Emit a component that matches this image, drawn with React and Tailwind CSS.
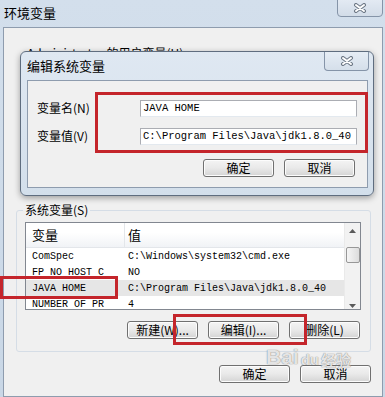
import React from 'react';

const cjk = { fontFamily: '"Noto Sans CJK SC", "Liberation Sans", sans-serif' };
const mono = { fontFamily: '"Liberation Mono", "Noto Sans CJK SC", monospace' };

const CloseGlyph = () => (
    <svg width="14" height="10" viewBox="0 0 14 10">
        <path d="M3 2 L11 8 M11 2 L3 8" stroke="#6b7684" strokeWidth="4" strokeLinecap="round" />
        <path d="M3 2 L11 8 M11 2 L3 8" stroke="#ffffff" strokeWidth="2" strokeLinecap="round" />
    </svg>
);

const Btn = ({ children, className = '' }) => (
    <div
        style={cjk}
        className={`h-[18px] w-[71px] flex items-center justify-center rounded-[3px] border border-[#707070] bg-gradient-to-b from-[#f4f4f4] via-[#e9e9e9] to-[#d4d4d4] text-[12px] leading-none text-black shadow-[inset_0_0_0_1px_#fcfcfc] ${className}`}
    >
        {children}
    </div>
);

const rows = [
    { name: 'ComSpec', value: 'C:\\Windows\\system32\\cmd.exe' },
    { name: 'FP NO HOST C', value: 'NO' },
    { name: 'JAVA HOME', value: 'C:\\Program Files\\Java\\jdk1.8.0_40', selected: true },
    { name: 'NUMBER OF PR', value: '4' },
];

const App = () => {
    return (
        <div className="relative w-[385px] h-[397px] overflow-hidden flex flex-col bg-gradient-to-b from-[#d3dfec] to-[#c9d7e6]">
            {/* title bar */}
            <div className="h-[27px] flex items-start justify-between shrink-0">
                <span style={cjk} className="self-center pl-[4px] pb-[1px] text-[13px] text-black">环境变量</span>
                <div className="w-[46px] h-[18px] mr-[2px] -mt-[1px] flex items-center justify-center rounded-b-[4px] border border-[#8594a8] bg-gradient-to-b from-[#e3eaf3] to-[#d2dce8]">
                    <CloseGlyph />
                </div>
            </div>

            {/* outer content */}
            <div className="flex-1 ml-[3px] mr-[2px] border border-[#8e9cae] bg-[#f0f0f0] flex flex-col">
                <div className="h-[182px] shrink-0 pt-[12px] pl-[23px]">
                    <span style={cjk} className="text-[12px] text-black">Administrator 的用户变量(U)</span>
                </div>

                {/* system variables group */}
                <div className="relative ml-[12px] mr-[11px] border border-[#d5dde6] rounded-[3px] pt-[11px] pb-[12px] pl-[8px] pr-[10px]">
                    <span style={cjk} className="absolute -top-[9px] left-[6px] px-[2px] bg-[#f0f0f0] text-[12px] leading-[16px] text-black">系统变量(S)</span>

                    <div className="relative w-[336px] h-[88px] border border-[#828790] bg-white overflow-hidden flex">
                        <div className="flex-1 flex flex-col">
                            <div style={cjk} className="h-[25px] shrink-0 flex text-[13px] text-black bg-gradient-to-b from-white from-40% to-[#f1f3f6] border-b border-[#e3e6ea]">
                                <div className="w-[99px] pl-[6px] flex items-center border-r border-[#e3e6ea]">变量</div>
                                <div className="flex-1 pl-[3px] flex items-center">值</div>
                            </div>
                            {rows.map((r) => (
                                <div
                                    key={r.name}
                                    style={mono}
                                    className={`h-[16px] shrink-0 flex items-center text-[10px] text-black ${r.selected ? 'bg-[#e6e6e6]' : ''}`}
                                >
                                    <div className="w-[99px] pl-[6px] whitespace-pre">{r.name}</div>
                                    <div className="flex-1 pl-[3px] whitespace-pre">{r.value}</div>
                                </div>
                            ))}
                        </div>
                        {/* scrollbar */}
                        <div className="w-[16px] shrink-0 bg-[#f2f2f2] border-l border-[#eaeaea] flex flex-col items-center">
                            <div className="h-[16px] flex items-center justify-center">
                                <svg width="7" height="4" viewBox="0 0 7 4"><path d="M0 4 L3.5 0 L7 4 Z" fill="#5a5a5a" /></svg>
                            </div>
                            <div className="mt-[8px] w-[14px] h-[16px] rounded-[2px] border border-[#979797] bg-gradient-to-r from-[#f5f5f5] to-[#dcdcdc]" />
                            <div className="mt-auto h-[12px] flex items-end justify-center pb-[1px]">
                                <svg width="7" height="4" viewBox="0 0 7 4"><path d="M0 0 L3.5 4 L7 0 Z" fill="#5a5a5a" /></svg>
                            </div>
                        </div>
                    </div>

                    <div className="mt-[11px] flex justify-end gap-[10px]">
                        <Btn>新建(W)...</Btn>
                        <Btn>编辑(I)...</Btn>
                        <Btn>删除(L)</Btn>
                    </div>
                </div>

                <div className="mt-[13px] pr-[11px] flex justify-end gap-[10px]">
                    <Btn>确定</Btn>
                    <Btn>取消</Btn>
                </div>
            </div>

            {/* edit dialog on top */}
            <div className="absolute left-[20px] top-[51px] w-[354px] h-[145px] rounded-[6px] border border-[#5f6d7f] bg-gradient-to-b from-[#dfe8f2] to-[#d3dfeb] shadow-[0_2px_6px_rgba(0,0,0,0.35)] flex flex-col">
                <div className="h-[28px] shrink-0 flex items-start justify-between">
                    <span style={cjk} className="self-center pl-[6px] text-[13px] text-black">编辑系统变量</span>
                    <div className="w-[45px] h-[19px] mr-[4px] flex items-center justify-center rounded-b-[4px] border border-t-0 border-[#8594a8] bg-gradient-to-b from-[#e6edf5] to-[#d5dfea]">
                        <CloseGlyph />
                    </div>
                </div>
                <div className="h-[108px] ml-[6px] mr-[5px] border border-[#8e9cae] bg-[#f0f0f0] flex flex-col">
                    <div className="mt-[18px] pl-[9px] grid grid-cols-[103px_217px] gap-y-[10px] items-center">
                        <span style={cjk} className="text-[12px] text-black">变量名(N)</span>
                        <div style={mono} className="h-[17px] border border-[#abadb3] border-b-[#e3e9ef] bg-white pl-[2px] text-[10.5px] leading-[15px] text-black whitespace-pre">JAVA HOME</div>
                        <span style={cjk} className="text-[12px] text-black">变量值(V)</span>
                        <div style={mono} className="h-[17px] border border-[#abadb3] border-b-[#e3e9ef] bg-white pl-[2px] text-[10.5px] leading-[15px] text-black whitespace-pre">C:\Program Files\Java\jdk1.8.0_40</div>
                    </div>
                    <div className="mt-[14px] pr-[12px] flex justify-end gap-[10px]">
                        <Btn className="border-[#3c7fb1]">确定</Btn>
                        <Btn>取消</Btn>
                    </div>
                </div>
            </div>

            {/* annotations */}
            <div className="absolute left-[95px] top-[92px] w-[273px] h-[61px] border-[3px] border-[#c4252b]" />
            <div className="absolute left-0 top-[276px] w-[118px] h-[23px] border-[3px] border-[#c4252b]" />
            <div className="absolute left-[173px] top-[314px] w-[134px] h-[31px] border-[3px] border-[#c4252b]" />

            {/* watermark */}
            <div className="absolute left-[266px] top-[346px] flex flex-col items-center text-white/80 [text-shadow:0_0_1px_rgba(90,90,90,0.6),0_0_1px_rgba(90,90,90,0.6)]">
                <div className="flex items-end gap-[2px]">
                    <span className="text-[21px] font-bold leading-none" style={{ fontFamily: '"Liberation Sans", sans-serif' }}>Bai</span>
                    <span className="text-[15px] font-bold leading-none" style={{ fontFamily: '"Liberation Sans", sans-serif' }}>du</span>
                    <span style={cjk} className="text-[15px] font-bold leading-none">经验</span>
                </div>
            </div>
        </div>
    );
};

export default App;
